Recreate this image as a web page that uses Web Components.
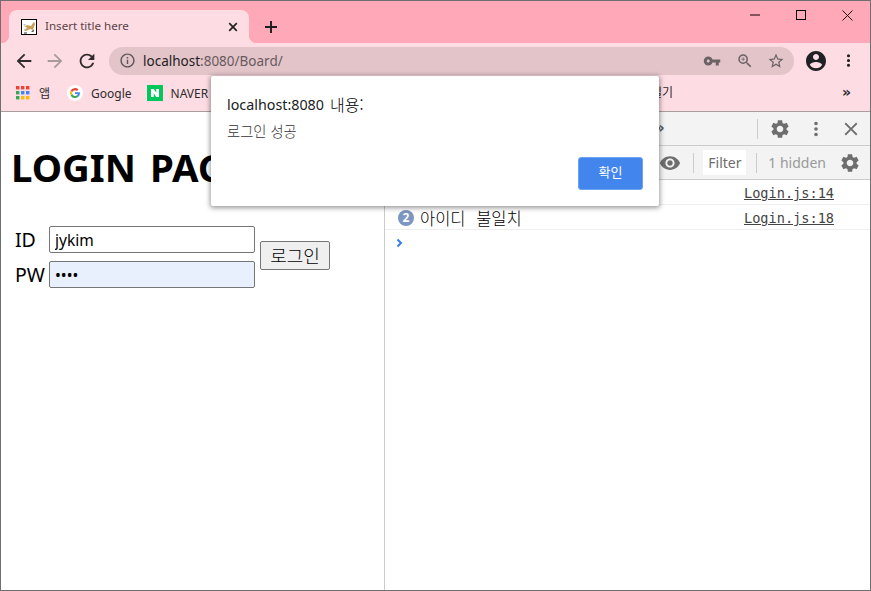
<!DOCTYPE html>
<html lang="ko"><head><meta charset="utf-8"><title>Insert title here</title>
<style>
html,body{margin:0;padding:0;height:100%;overflow:hidden;background:#fff}
body{font-family:"Noto Sans","Noto Sans CJK KR",sans-serif}
</style></head><body>
<browser-window>
  <browser-tabstrip slot="chrome"></browser-tabstrip>
  <browser-toolbar slot="chrome"></browser-toolbar>
  <browser-bookmarks slot="chrome"></browser-bookmarks>
  <login-page slot="page"></login-page>
  <dev-tools slot="tools"></dev-tools>
  <alert-dialog slot="overlay" origin="localhost:8080" suffix="내용:" message="로그인 성공" action="확인"></alert-dialog>
</browser-window>
<script>
const P={
back:'M20 11H7.83l5.59-5.59L12 4l-8 8 8 8 1.41-1.41L7.83 13H20v-2z',
reload:'M17.65 6.35A7.958 7.958 0 0 0 12 4c-4.42 0-7.99 3.58-7.99 8s3.57 8 7.99 8c3.73 0 6.84-2.55 7.73-6h-2.08A5.99 5.99 0 0 1 12 18c-3.31 0-6-2.69-6-6s2.69-6 6-6c1.66 0 3.14.69 4.22 1.78L13 11h7V4l-2.35 2.35z',
info:'M11 7h2v2h-2zm0 4h2v6h-2zm1-9C6.48 2 2 6.48 2 12s4.48 10 10 10 10-4.48 10-10S17.52 2 12 2zm0 18c-4.41 0-8-3.59-8-8s3.59-8 8-8 8 3.59 8 8-3.59 8-8 8z',
key:'M12.65 10A5.99 5.99 0 0 0 7 6c-3.31 0-6 2.69-6 6s2.69 6 6 6a5.99 5.99 0 0 0 5.65-4H17v4h4v-4h2v-4H12.65zM7 14c-1.1 0-2-.9-2-2s.9-2 2-2 2 .9 2 2-.9 2-2 2z',
zoom:'M15.5 14h-.79l-.28-.27A6.47 6.47 0 0 0 16 9.5 6.5 6.5 0 1 0 9.5 16c1.61 0 3.09-.59 4.23-1.57l.27.28v.79l5 4.99L20.49 19l-4.99-5zm-6 0C7.01 14 5 11.99 5 9.5S7.01 5 9.5 5 14 7.01 14 9.5 11.99 14 9.5 14zM12 10h-2v2H9v-2H7V9h2V7h1v2h2v1z',
star:'M22 9.24l-7.19-.62L12 2 9.19 8.63 2 9.24l5.46 4.73L5.82 21 12 17.27 18.18 21l-1.63-7.03L22 9.24zM12 15.4l-3.76 2.27 1-4.28-3.32-2.88 4.38-.38L12 6.1l1.71 4.04 4.38.38-3.32 2.88 1 4.28L12 15.4z',
account:'M12 2C6.48 2 2 6.48 2 12s4.48 10 10 10 10-4.48 10-10S17.52 2 12 2zm0 3c1.66 0 3 1.34 3 3s-1.34 3-3 3-3-1.34-3-3 1.34-3 3-3zm0 14.2a7.2 7.2 0 0 1-6-3.22c.03-1.99 4-3.08 6-3.08 1.99 0 5.97 1.09 6 3.08a7.2 7.2 0 0 1-6 3.22z',
gear:'M19.14 12.94c.04-.3.06-.61.06-.94 0-.32-.02-.64-.07-.94l2.03-1.58a.49.49 0 0 0 .12-.61l-1.92-3.32a.488.488 0 0 0-.59-.22l-2.39.96c-.5-.38-1.03-.7-1.62-.94l-.36-2.54a.484.484 0 0 0-.48-.41h-3.84c-.24 0-.43.17-.47.41l-.36 2.54c-.59.24-1.13.57-1.62.94l-2.39-.96c-.22-.08-.47 0-.59.22L2.74 8.87c-.12.21-.08.47.12.61l2.03 1.58c-.05.3-.09.63-.09.94s.02.64.07.94l-2.03 1.58a.49.49 0 0 0-.12.61l1.92 3.32c.12.22.37.29.59.22l2.39-.96c.5.38 1.03.7 1.62.94l.36 2.54c.05.24.24.41.48.41h3.84c.24 0 .44-.17.47-.41l.36-2.54c.59-.24 1.13-.56 1.62-.94l2.39.96c.22.08.47 0 .59-.22l1.92-3.32c.12-.22.07-.47-.12-.61l-2.01-1.58zM12 15.6c-1.98 0-3.6-1.62-3.6-3.6s1.62-3.6 3.6-3.6 3.6 1.62 3.6 3.6-1.62 3.6-3.6 3.6z',
eye:'M12 4.5C7 4.5 2.73 7.61 1 12c1.73 4.39 6 7.5 11 7.5s9.27-3.11 11-7.5c-1.73-4.39-6-7.5-11-7.5zM12 17c-2.76 0-5-2.24-5-5s2.24-5 5-5 5 2.24 5 5-2.24 5-5 5zm0-8c-1.66 0-3 1.34-3 3s1.34 3 3 3 3-1.34 3-3-1.34-3-3-3z',
dots:'M12 8a2 2 0 1 0 0-4 2 2 0 0 0 0 4zm0 2a2 2 0 1 0 0 4 2 2 0 0 0 0-4zm0 6a2 2 0 1 0 0 4 2 2 0 0 0 0-4z',
close:'M19 6.41 17.59 5 12 10.59 6.41 5 5 6.41 10.59 12 5 17.59 6.41 19 12 13.41 17.59 19 19 17.59 13.41 12z'
};
const ic=(n,s,c,extra='')=>`<svg width="${s}" height="${s}" viewBox="0 0 24 24" fill="${c}" style="display:block;flex:none;${extra}"><path d="${P[n]}"/></svg>`;
function def(name,html,init){
  customElements.define(name,class extends HTMLElement{
    constructor(){super();this.attachShadow({mode:'open'}).innerHTML=typeof html==='function'?html(this):html}
    connectedCallback(){if(init)init(this)}
  });
}
def('browser-window',`<style>
:host{display:flex;flex-direction:column;width:871px;height:591px;box-sizing:border-box;border:1px solid #6f6f6f;position:relative;overflow:hidden;background:#fff}
.chrome{display:block;flex:none}
.main{flex:1;display:flex;min-height:0}
.page{display:block;width:383px;flex:none;border-right:1px solid #cbcbcb}
.tools{display:block;flex:1;min-width:0}
</style>
<div class="chrome"><slot name="chrome"></slot></div>
<div class="main"><div class="page"><slot name="page"></slot></div><div class="tools"><slot name="tools"></slot></div></div>
<slot name="overlay"></slot>`);

def('browser-tabstrip',`<style>
:host{display:flex;height:42px;background:#ffa9b8;align-items:flex-end;font:12px "Noto Sans","Noto Sans CJK KR",sans-serif;position:relative}
.tab{width:240px;height:33px;margin-left:8px;background:#fddde3;border-radius:8px 8px 0 0;display:flex;align-items:center;box-sizing:border-box;padding:0 8px 0 12px;position:relative}
.tab:before,.tab:after{content:"";position:absolute;bottom:0;width:8px;height:8px}
.tab:before{left:-8px;background:radial-gradient(circle at 0 0,transparent 8px,#fddde3 8.5px)}
.tab:after{right:-8px;background:radial-gradient(circle at 100% 0,transparent 8px,#fddde3 8.5px)}
.fav{width:16px;height:16px;flex:none;display:block}
.t{margin-left:8px;color:#5b4347;flex:1;white-space:nowrap;font-size:11.6px;padding-bottom:2px}
.new{margin-left:14px;margin-bottom:8px}
.caps{position:absolute;right:0;top:0;display:flex;height:28px}
.cap{width:46px;height:28px;display:flex;align-items:center;justify-content:center}
</style>
<div class="tab">
<svg class="fav" viewBox="0 0 16 16"><rect x=".5" y=".5" width="15" height="15" fill="#fff" stroke="#000"/><path d="M2 7l2 .5 2-1.500 4 1 2-3 1-1 1 2-1 3-1 3-3-1-4 2-2 0 2-2 1-1.500-3-1z" fill="#c9a05a"/><path d="M2 5l3 .5-1 1.500zM3 10l2-.5-1 2z" fill="#b5b5a8"/><path d="M10 13l3-.5-.5-2zM3 13.500h3v1H3z" fill="#333"/></svg>
<span class="t">Insert title here</span>
<svg width="16" height="16" viewBox="0 0 16 16" style="flex:none"><path d="M4.200 4.200l7.600 7.600M11.800 4.200l-7.600 7.600" stroke="#222" stroke-width="1.7"/></svg>
</div>
<svg class="new" width="16" height="16" viewBox="0 0 16 16"><path d="M8 2v12M2 8h12" stroke="#1d1d1f" stroke-width="1.9"/></svg>
<div class="caps">
<div class="cap"><svg width="10" height="10" viewBox="0 0 10 10"><path d="M0 5h10" stroke="#000"/></svg></div>
<div class="cap"><svg width="10" height="10" viewBox="0 0 10 10"><rect x=".5" y=".5" width="9" height="9" fill="none" stroke="#000"/></svg></div>
<div class="cap"><svg width="11" height="11" viewBox="0 0 11 11"><path d="M.5.5l10 10M10.500.5l-10 10" stroke="#000" stroke-width=".9"/></svg></div>
</div>`);

def('browser-toolbar',`<style>
:host{display:flex;height:35px;background:#fddde3;align-items:center;padding-left:11px;box-sizing:border-box;font:14px "Noto Sans","Noto Sans CJK KR",sans-serif}
.omni{width:685px;height:28px;border-radius:14px;background:#e2c4c9;display:flex;align-items:center;box-sizing:border-box;padding-left:10px;flex:none;margin-left:11px}
.url{margin-left:7px;flex:1;color:#6a5a5d;font-size:13.5px;position:relative;top:.5px}.url b{font-weight:400;color:#231c1e}
.ri{display:flex;align-items:center;margin-right:9px}
.acc{margin-left:10px}.more{margin-left:11px}
</style>
${ic('back',22,'#2f2a2b','margin-left:1px')}
${ic('back',22,'#a79a9d','transform:scaleX(-1);margin-left:9px')}
${ic('reload',22,'#2f2a2b','margin-left:10px')}
<div class="omni">${ic('info',17,'#5c5456')}<span class="url"><b>localhost</b>:8080/Board/</span>
<div class="ri">${ic('key',18,'#6a6265','margin-right:15px')}${ic('zoom',18,'#6a6265','margin-right:13px')}${ic('star',18,'#6a6265')}</div></div>
<div class="acc">${ic('account',24,'#202124')}</div>
<div class="more">${ic('dots',19,'#202124')}</div>`);

def('browser-bookmarks',`<style>
:host{display:flex;height:34px;background:#fddde3;border-bottom:1px solid #a79ea0;align-items:center;padding:0 0 3px 15px;box-sizing:border-box;font:12px "Noto Sans","Noto Sans CJK KR",sans-serif;color:#2f2b2c;white-space:nowrap;position:relative}
.b{display:flex;align-items:center;flex:none}.b span{margin-left:8px}
.end{margin-left:auto;margin-right:19px;font:700 14px "DejaVu Sans",sans-serif;color:#2c2c2c;position:relative;top:-1px}
.ll{position:absolute;left:650px;top:5px}
</style>
<div class="b"><svg width="14" height="14" viewBox="0 0 14 14" style="display:block">
<rect width="3.400" height="3.400" x="0" y="0" fill="#ea4335"/><rect width="3.400" height="3.400" x="5" y="0" fill="#ea4335"/><rect width="3.400" height="3.400" x="10" y="0" fill="#ea4335"/>
<rect width="3.400" height="3.400" x="0" y="5" fill="#34a853"/><rect width="3.400" height="3.400" x="5" y="5" fill="#4285f4"/><rect width="3.400" height="3.400" x="10" y="5" fill="#4285f4"/>
<rect width="3.400" height="3.400" x="0" y="10" fill="#34a853"/><rect width="3.400" height="3.400" x="5" y="10" fill="#fbbc05"/><rect width="3.400" height="3.400" x="10" y="10" fill="#fbbc05"/></svg><span style="margin-left:9px">앱</span></div>
<div class="b" style="margin-left:17px"><svg width="16" height="16" viewBox="0 0 48 48" style="display:block"><circle cx="24" cy="24" r="24" fill="#fff"/><path fill="#EA4335" d="M24 15.500c2.300 0 4.300.8 5.900 2.300l4.400-4.400A15 15 0 0 0 10.600 17.300l5.100 4c1.200-3.400 4.400-5.800 8.300-5.800z"/><path fill="#4285F4" d="M38.700 24.400c0-1-.1-2-.3-3H24v5.700h8.300a7.100 7.100 0 0 1-3.100 4.700l4.900 3.800c2.900-2.700 4.600-6.600 4.600-11.200z"/><path fill="#FBBC05" d="M15.700 26.700a8.900 8.900 0 0 1 0-5.400l-5.100-4a15 15 0 0 0 0 13.400z"/><path fill="#34A853" d="M24 39c4 0 7.400-1.300 9.900-3.600l-4.900-3.800c-1.400.9-3.100 1.400-5 1.400-3.900 0-7.100-2.400-8.300-5.800l-5.100 4A15 15 0 0 0 24 39z"/></svg><span>Google</span></div>
<div class="b" style="margin-left:15px"><svg width="16" height="16" viewBox="0 0 16 16" style="display:block"><rect width="16" height="16" fill="#03c75a"/><path d="M4 4h2.800l2.500 3.800V4H12v8H9.200L6.700 8.200V12H4z" fill="#fff"/></svg><span>NAVER</span></div>
<div class="ll">일기</div>
<div class="end">»</div>`);

def('login-page',`<style>
:host{display:block;height:100%;font:18px "Noto Sans","Noto Sans CJK KR",sans-serif;color:#000;padding-left:10px}
h1{margin:0;padding-top:29px;font-size:38.4px;font-weight:700;line-height:52px;white-space:nowrap;word-spacing:4px}
.form{display:flex;align-items:center;margin-top:33px;margin-left:4px}
.rows{display:grid;grid-template-columns:34px 206px;row-gap:8px;align-items:center}
label{font-size:19.5px;line-height:27px;font-weight:400}
input{box-sizing:border-box;width:206px;height:27px;border:1px solid #767676;border-radius:2px;padding:0 5px;margin:0;font:15.5px "Noto Sans","Noto Sans CJK KR",sans-serif;outline:none;background:#fff;color:#000}
input.fill{background:#e8f0fe}
button{margin:0 0 4px 5px;width:70px;height:29px;box-sizing:border-box;border:1px solid #767676;border-radius:2px;background:#efefef;font:300 18px "Noto Sans CJK KR","Noto Sans",sans-serif;padding:0;color:#000}
</style>
<h1>LOGIN PAGE</h1>
<div class="form"><div class="rows"><label>ID</label><input value="jykim"><label>PW</label><input class="fill" type="password" value="1234"></div><button>로그인</button></div>`);

def('dev-tools',`<style>
:host{display:block;height:100%;font:14px "Noto Sans","Noto Sans CJK KR",sans-serif;color:#333;background:#fff}
.bar{height:34px;background:#f3f3f3;border-bottom:1px solid #ccc;display:flex;align-items:center;justify-content:flex-end;box-sizing:border-box;position:relative}
.sep{width:1px;height:20px;background:#ccc;flex:none}
.f{width:43px;height:25px;background:#fff;box-sizing:border-box;padding-left:5px;line-height:25px;color:#6d6d6d;font-size:14px;margin:0 10px 0 9px;flex:none}
.row{height:25px;border-bottom:1px solid #efefef;display:flex;align-items:center;box-sizing:border-box;padding:2px 36px 0 13px;font:300 16.5px "Noto Sans CJK KR",monospace;color:#000;word-spacing:6px}
.row a{margin-left:auto;font:13.6px "DejaVu Sans Mono",monospace;color:#444;text-decoration:underline;word-spacing:0}
.badge{width:16px;height:16px;border-radius:50%;background:#7b96c0;color:#fff;font:700 12px/16px "Noto Sans",sans-serif;text-align:center;margin-right:6px;flex:none}
.prompt{padding:8px 0 0 11px}
</style>
<div class="bar">
<span style="position:absolute;left:270px;top:7px;font:700 15px 'DejaVu Sans',sans-serif;color:#5a5a5a">»</span>
<div class="sep" style="margin-right:11px"></div>${ic('gear',22,'#6e6e6e','margin-right:14px')}${ic('dots',22,'#6e6e6e','margin-right:13px')}${ic('close',22,'#6e6e6e','margin-right:8px')}</div>
<div class="bar">${ic('eye',22,'#6e6e6e','margin-right:12px')}<div class="sep"></div><div class="f">Filter</div><div class="sep"></div><span style="color:#9a9a9a;margin:0 13px 0 11px">1 hidden</span>${ic('gear',22,'#6e6e6e','margin-right:9px')}</div>
<div class="row"><a>Login.js:14</a></div>
<div class="row"><span class="badge">2</span><span>아이디 불일치</span><a>Login.js:18</a></div>
<div class="prompt"><svg width="8" height="10" viewBox="0 0 8 10" style="display:block"><path d="M1.500 1.500L5 5 1.500 8.500" fill="none" stroke="#367cf1" stroke-width="2"/></svg></div>`);

def('alert-dialog',h=>`<style>
:host{position:absolute;left:210px;top:75px;width:448px;height:130px;box-sizing:border-box;background:#fff;border-radius:2px;box-shadow:0 1px 5px 1px rgba(0,0,0,.4);display:flex;flex-direction:column;padding:0 16px;font:14px "Noto Sans","Noto Sans CJK KR",sans-serif}
.o{margin-top:18px;height:21px;line-height:21px;color:#202124;font-size:14.3px;display:flex;align-items:center}
.o span{font:300 16px/21px "Noto Sans CJK KR",sans-serif;margin-left:6px;color:#000}
.m{margin-top:6px;height:20px;font:300 14.300px/20px "Noto Sans CJK KR",sans-serif;color:#333}
.a{margin-top:auto;margin-bottom:16px;display:flex;justify-content:flex-end}
button{width:65px;height:33px;border:1px solid #6ea4ee;border-radius:3px;background:#4285ec;color:#fff;font:13px/27px "Noto Sans CJK KR",sans-serif;padding:0 0 4px}
</style>
<div class="o">${h.getAttribute('origin')}<span>${h.getAttribute('suffix')}</span></div><div class="m">${h.getAttribute('message')}</div>
<div class="a"><button>${h.getAttribute('action')}</button></div>`);
</script>
</body></html>
